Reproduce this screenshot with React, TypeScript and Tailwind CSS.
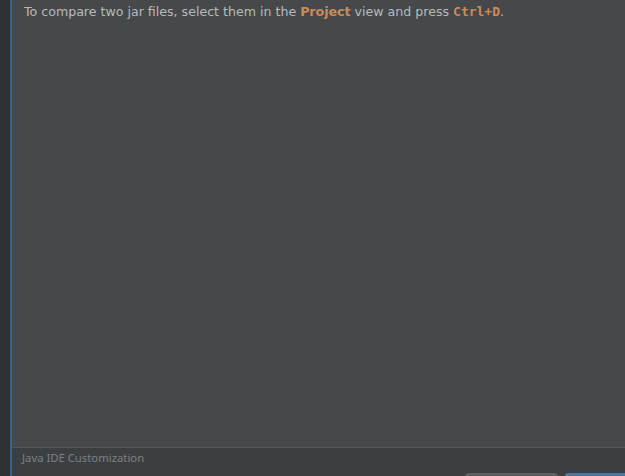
export default function App() {
  return (
    <div className="flex h-[476px] w-[625px] overflow-hidden bg-[#2f3133] font-['Noto_Sans',sans-serif]">
      {/* left gutter */}
      <div className="w-[10px] shrink-0 bg-[#2f3133]" />
      <div className="w-[2px] shrink-0 bg-[#3a6389]" />
      <div className="flex flex-1 flex-col">
        <div className="flex-1 bg-[#45494a] px-[12px] pt-[1px]">
          <p className="font-['DejaVu_Sans',sans-serif] text-[12.6px] leading-[22px] text-[#b8baba]">
            To compare two jar files, select them in the{" "}
            <span className="font-bold text-[#d08a56]">Project</span> view and press{" "}
            <span className="font-['DejaVu_Sans_Mono',monospace] text-[13px] font-bold text-[#d08a56]">
              Ctrl+D
            </span>
            .
          </p>
        </div>
        <div className="h-px bg-[#56595b]" />
        <div className="flex h-[28px] flex-col bg-[#3c3f41]">
          <div className="pl-[10px] pt-[2px] text-[11.3px] leading-[16px] text-[#7d8083]">
            Java IDE Customization
          </div>
          <div className="mt-auto flex justify-end gap-[7px]">
            <div className="h-[3px] w-[93px] rounded-t-[3px] bg-[#5b5e60]" />
            <div className="h-[3px] w-[60px] rounded-tl-[3px] bg-[#4a76a4]" />
          </div>
        </div>
      </div>
    </div>
  );
}
